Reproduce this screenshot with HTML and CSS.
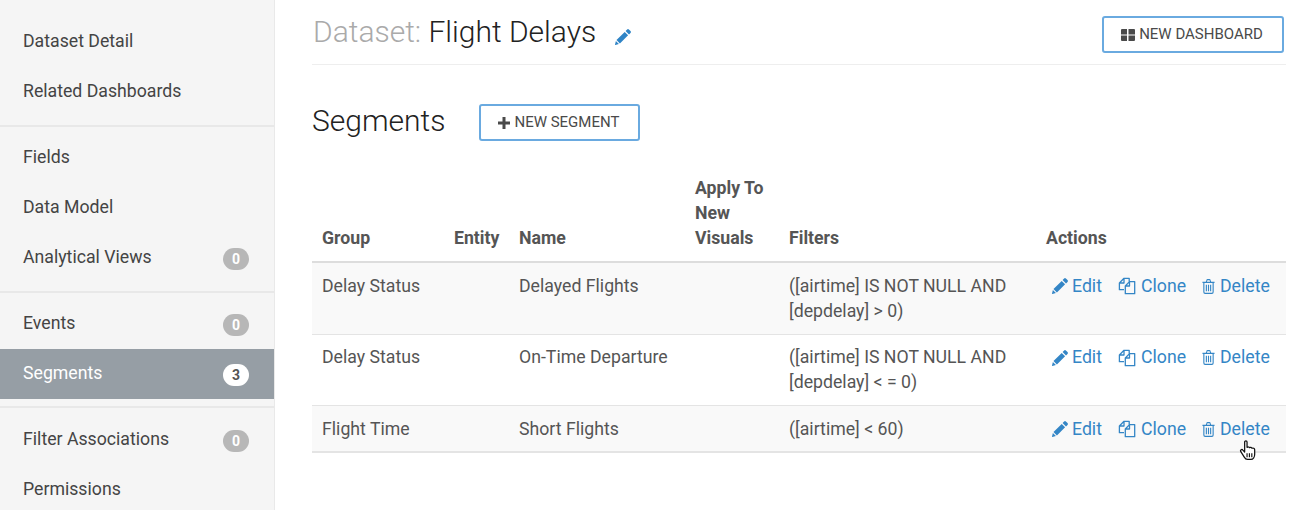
FILE: index.html
```html
<!DOCTYPE html>
<html lang="en">
<head>
<meta charset="utf-8">
<title>Dataset: Flight Delays</title>
<link rel="stylesheet" href="styles.css">
</head>
<body>
<svg class="defs" width="0" height="0" aria-hidden="true">
  <symbol id="i-pencil" viewBox="0 0 16 16"><path fill="currentColor" d="M12.100.5a1.300 1.300 0 0 1 1.800 0l1.600 1.600a1.300 1.300 0 0 1 0 1.800l-1.500 1.500-3.400-3.400zM9.700 2.900l3.400 3.400-8.200 8.200-3.400-3.400zM.9 12.100l3 3-3.500 .9a.4.4 0 0 1-.4-.5z"/></symbol>
  <symbol id="i-clone" viewBox="0 0 18 18"><path fill="none" stroke="currentColor" stroke-width="1.300" stroke-linejoin="round" d="M6 12.700H1.400V6L6 1.300h5.200v3.300M6 1.300V6H1.400M7.300 16.700V9L11.500 4.600h5.200v12.100zM11.500 4.600V9H7.300"/></symbol>
  <symbol id="i-trash" viewBox="0 0 14 16"><path fill="none" stroke="currentColor" stroke-width="1.200" stroke-linejoin="round" d="M.5 3.500h13M2 3.500V14c0 .9.500 1.400 1.300 1.400h7.400c.8 0 1.300-.5 1.300-1.400V3.500M4.500 3.500 5.300 1.200c.1-.4.3-.6.7-.6h2c.4 0 .6.200.7.600l.8 2.300M4.700 6v7M7 6v7M9.300 6v7"/></symbol>
</svg>
<div class="layout">
  <nav class="sidebar">
    <ul class="nav-group">
      <li class="nav-item">Dataset Detail</li>
      <li class="nav-item">Related Dashboards</li>
    </ul>
    <ul class="nav-group">
      <li class="nav-item">Fields</li>
      <li class="nav-item">Data Model</li>
      <li class="nav-item">Analytical Views<span class="badge">0</span></li>
    </ul>
    <ul class="nav-group nav-group-tight">
      <li class="nav-item">Events<span class="badge">0</span></li>
      <li class="nav-item active">Segments<span class="badge">3</span></li>
    </ul>
    <ul class="nav-group">
      <li class="nav-item">Filter Associations<span class="badge">0</span></li>
      <li class="nav-item">Permissions</li>
    </ul>
  </nav>
  <main class="main">
    <header class="page-header">
      <h1 class="page-title"><span class="muted">Dataset:</span> Flight Delays<svg class="title-edit"><use href="#i-pencil"/></svg></h1>
      <button class="btn btn-dash"><svg class="btn-icon-grid" viewBox="0 0 14 12"><path fill="currentColor" d="M0 1a1 1 0 0 1 1-1h5v5.400H0zM7.500 0H13a1 1 0 0 1 1 1v4.400H7.500zM0 6.600h6V12H1a1 1 0 0 1-1-1zM7.500 6.600H14V11a1 1 0 0 1-1 1H7.500z"/></svg>NEW DASHBOARD</button>
    </header>
    <section class="section-head">
      <h2 class="section-title">Segments</h2>
      <button class="btn btn-seg"><svg class="btn-icon-plus" viewBox="0 0 12 12"><path fill="currentColor" d="M4.500 0h3v4.500H12v3H7.500V12h-3V7.500H0v-3h4.500z"/></svg>NEW SEGMENT</button>
    </section>
    <table class="grid">
      <colgroup><col class="c1"><col class="c2"><col class="c3"><col class="c4"><col class="c5"><col class="c6"></colgroup>
      <thead>
        <tr><th>Group</th><th>Entity</th><th>Name</th><th>Apply To New Visuals</th><th>Filters</th><th>Actions</th></tr>
      </thead>
      <tbody>
        <tr class="odd">
          <td>Delay Status</td><td></td><td>Delayed Flights</td><td></td>
          <td>([airtime] IS NOT NULL AND [depdelay] &gt; 0)</td>
          <td><div class="actions">
            <a class="act act-edit"><svg class="ic-pencil"><use href="#i-pencil"/></svg>Edit</a>
            <a class="act act-clone"><svg class="ic-clone"><use href="#i-clone"/></svg>Clone</a>
            <a class="act"><svg class="ic-trash"><use href="#i-trash"/></svg>Delete</a>
          </div></td>
        </tr>
        <tr>
          <td>Delay Status</td><td></td><td>On-Time Departure</td><td></td>
          <td>([airtime] IS NOT NULL AND [depdelay] &lt; = 0)</td>
          <td><div class="actions">
            <a class="act act-edit"><svg class="ic-pencil"><use href="#i-pencil"/></svg>Edit</a>
            <a class="act act-clone"><svg class="ic-clone"><use href="#i-clone"/></svg>Clone</a>
            <a class="act"><svg class="ic-trash"><use href="#i-trash"/></svg>Delete</a>
          </div></td>
        </tr>
        <tr class="odd">
          <td>Flight Time</td><td></td><td>Short Flights</td><td></td>
          <td>([airtime] &lt; 60)</td>
          <td><div class="actions">
            <a class="act act-edit"><svg class="ic-pencil"><use href="#i-pencil"/></svg>Edit</a>
            <a class="act act-clone"><svg class="ic-clone"><use href="#i-clone"/></svg>Clone</a>
            <a class="act act-last"><svg class="ic-trash"><use href="#i-trash"/></svg>Delete<svg class="cursor" viewBox="0 0 18 22"><path fill="#fff" stroke="#111" stroke-width="1.300" stroke-linejoin="round" d="M5.500 2.200c0-1.600 2.500-1.600 2.500 0v5.500c1-.6 2.200-.5 2.600.3 1-.5 2.100-.3 2.500.6 1.300-.5 2.900.1 2.900 1.700v4.700c0 2.600-1.500 5.300-4 5.300H8.500c-1.600 0-2.600-.9-3.400-2.300L1.300 12c-.8-1.600 1.300-2.800 2.400-1.400l1.800 2.100z"/><path fill="none" stroke="#111" stroke-width="1.200" d="M8 14v4M10.500 14v4M13 14v4"/></svg></a>
          </div></td>
        </tr>
      </tbody>
    </table>
  </main>
</div>
</body>
</html>
```
FILE: styles.css
```css
* { box-sizing: border-box; }
html, body { margin: 0; height: 510px; overflow: hidden; background: #fff; }
body { font-family: Roboto, "Liberation Sans", sans-serif; font-size: 17.7px; color: #555; }
.defs { position: absolute; }
.layout { display: flex; height: 510px; }
.sidebar { width: 275px; flex: none; background: #f5f5f5; border-right: 1px solid #e9e9e9; padding-top: 16px; overflow: hidden; }
.nav-group { list-style: none; margin: 0 0 5px; padding: 0 0 9px; border-bottom: 2px solid #e8e8e8; }
.nav-group-tight { padding-bottom: 7px; margin-bottom: 6px; }
.nav-group:last-child { border-bottom: 0; }
.nav-item { height: 50px; padding: 0 25px 0 23px; display: flex; align-items: center; justify-content: space-between; color: #444; }
.nav-item.active { background: #969ea5; color: #fff; margin-top: 1px; padding-bottom: 2px; }
.badge { width: 26px; height: 22px; margin-top: 3px; border-radius: 11px; background: #b7b7b7; color: #fff; font-size: 14px; font-weight: 700; display: flex; align-items: center; justify-content: center; }
.active .badge { background: #fff; color: #555; margin-top: 3px; }
.main { flex: 1; min-width: 0; padding: 0 30px 0 37px; }
.page-header { height: 65px; border-bottom: 1px solid #eee; display: flex; align-items: flex-start; justify-content: space-between; }
.page-title { margin: 12px 0 0; font-size: 30px; line-height: 40px; font-weight: 300; color: #222; display: flex; align-items: center; white-space: pre; }
.muted { color: #aaa; margin-left: 1px; }
.title-edit { width: 16px; height: 16px; margin: 9px 0 0 19px; color: #2f84c6; }
.btn { background: #fff; border: 2px solid #6aaae0; border-radius: 3px; color: #4a4a4a; font: 400 15px/1 Roboto, "Liberation Sans", sans-serif; display: flex; align-items: center; justify-content: center; padding: 0 2px 0 0; }
.btn-dash { width: 182px; height: 37px; margin: 16px 2px 0 0; }
.btn-seg { width: 161px; height: 37px; margin-left: 34px; }
.btn-icon-grid { width: 14px; height: 12px; margin-right: 4px; }
.btn-icon-plus { width: 12px; height: 12px; margin-right: 4px; }
.section-head { display: flex; align-items: center; margin-top: 39px; height: 37px; }
.section-title { margin: 0 0 5px; font-size: 30px; font-weight: 300; color: #222; line-height: 37px; }
.grid { border-collapse: collapse; table-layout: fixed; width: 974px; margin-top: 22px; }
.c1 { width: 132px; } .c2 { width: 65px; } .c3 { width: 176px; } .c4 { width: 94px; } .c5 { width: 257px; } .c6 { width: 250px; }
.grid th { text-align: left; vertical-align: bottom; font-weight: 700; color: #555; line-height: 25px; padding: 13px 10px 10px; border-bottom: 2px solid #ddd; }
.grid td { vertical-align: top; line-height: 25px; padding: 10.5px 10px 10px; border-bottom: 1px solid #e4e4e4; color: #555; }
.grid tbody tr:last-child td { border-bottom: 2px solid #e4e4e4; padding-bottom: 9px; }
.odd td { background: #f9f9f9; }
.actions { display: flex; padding-left: 6px; }
.act { display: flex; align-items: center; position: relative; color: #3486c6; }
.act-edit { width: 66px; }
.act-clone { width: 84px; }
.ic-pencil { width: 16px; height: 16px; margin-right: 4px; }
.ic-clone { width: 18px; height: 18px; margin-right: 5px; }
.ic-trash { width: 13px; height: 15px; margin-right: 5px; }
.cursor { position: absolute; left: 37px; top: 23px; width: 18px; height: 21px; }
```
